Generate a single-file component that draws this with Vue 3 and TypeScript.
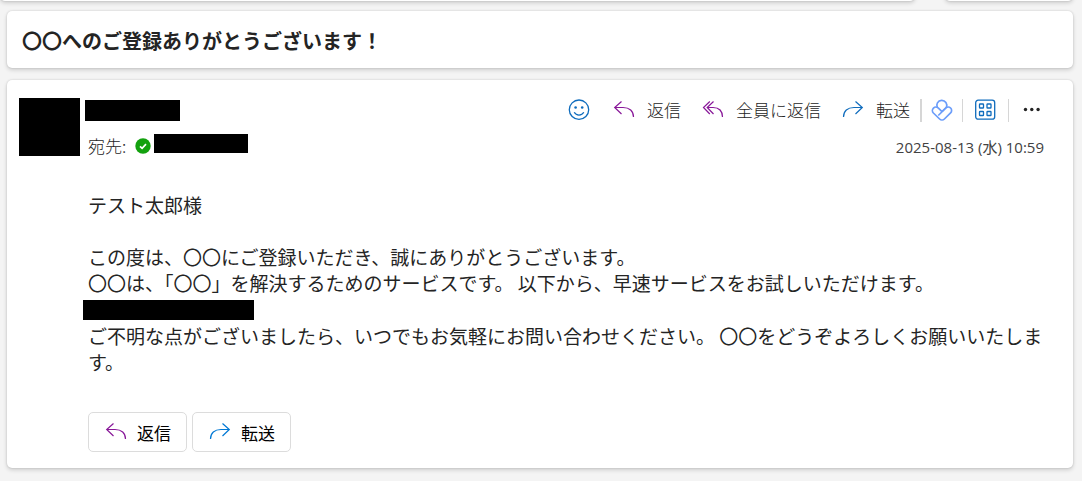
<script setup lang="ts">
interface Line {
  kind: 'text' | 'blank' | 'redacted'
  text?: string
}

const subject = '〇〇へのご登録ありがとうございます！'
const sentAt = '2025-08-13 (水) 10:59'

const lines: Line[] = [
  { kind: 'text', text: 'テスト太郎様' },
  { kind: 'blank' },
  { kind: 'text', text: 'この度は、〇〇にご登録いただき、誠にありがとうございます。' },
  {
    kind: 'text',
    text: '〇〇は、「〇〇」を解決するためのサービスです。 以下から、早速サービスをお試しいただけます。',
  },
  { kind: 'redacted' },
  {
    kind: 'text',
    text: 'ご不明な点がございましたら、いつでもお気軽にお問い合わせください。 〇〇をどうぞよろしくお願いいたします。',
  },
]
</script>

<template>
  <main class="page">
    <div class="ribbon" aria-hidden="true">
      <div class="ribbon-main"></div>
      <div class="ribbon-side"></div>
    </div>

    <div class="stack">
      <header class="card subject">
        <h1>{{ subject }}</h1>
      </header>

      <article class="card message">
        <div class="head">
          <div class="avatar"></div>
          <div class="who">
            <div class="sender"></div>
            <div class="to">
              <span class="to-label">宛先:</span>
              <svg class="presence" viewBox="0 0 16 16" aria-hidden="true">
                <circle cx="8" cy="8" r="7.7" fill="#13a10e" />
                <path d="M5 8.3L7.1 10.3L11 6.2" fill="none" stroke="#fff" stroke-width="1.7" />
              </svg>
              <div class="recipient"></div>
            </div>
          </div>

          <div class="meta">
            <div class="toolbar" role="toolbar" aria-label="メッセージの操作">
              <button type="button" class="tool react" aria-label="リアクション">
                <svg class="icon blue" viewBox="0 0 22 22">
                  <circle cx="11" cy="10.7" r="9.7" />
                  <circle class="dot" cx="7.6" cy="8.5" r="1.3" />
                  <circle class="dot" cx="14.2" cy="8.5" r="1.3" />
                  <path d="M6.2 13.3C8.3 17 13.7 17 15.8 13.3" />
                </svg>
              </button>
              <button type="button" class="tool">
                <svg class="icon thin purple" viewBox="0 0 22 22" aria-hidden="true">
                  <path d="M8.5 2.5L1.7 8.5L8.5 15M1.7 8.5H10C16.5 8.5 20.5 12 20.5 18" />
                </svg>
                返信
              </button>
              <button type="button" class="tool">
                <svg class="icon thin purple" viewBox="0 0 22 22" aria-hidden="true">
                  <path d="M7.8 2.5L1.5 8.5L7.8 15M11.5 2.5L5.2 8.5L11.5 15M5.2 8.5H11C17 8.5 20.5 12 20.5 18" />
                </svg>
                全員に返信
              </button>
              <button type="button" class="tool">
                <svg class="icon thin blue" viewBox="0 0 22 22" aria-hidden="true">
                  <path d="M13.5 2.5L20.3 8.5L13.5 15M20.3 8.5H12C5.5 8.5 1.5 12 1.5 18" />
                </svg>
                転送
              </button>
              <div class="group">
                <span class="rule thick"></span>
                <button type="button" class="tool" aria-label="Viva">
                  <svg class="icon loop" viewBox="0 0 22 22">
                    <path d="M6.4 8.7A5 5 0 1 1 15.4 8.3L11 12.7" />
                    <path d="M11 12.7L7.4 9.1A3.3 3.3 0 0 0 2.4 14L8.6 20A3.4 3.4 0 0 0 13.4 20L19.6 13.8A3.3 3.3 0 0 0 14.8 9L7.3 16.5" />
                  </svg>
                </button>
                <span class="rule"></span>
              </div>
              <button type="button" class="tool apps" aria-label="アプリ">
                <svg class="icon blue" viewBox="0 0 22 22">
                  <rect x="1.7" y="1.2" width="19" height="19" rx="2.5" />
                  <rect x="5.5" y="5" width="4" height="4" rx="0.6" />
                  <rect x="13" y="5" width="4" height="4" rx="0.6" />
                  <rect x="5.5" y="12.5" width="4" height="4" rx="0.6" />
                  <rect x="13" y="12.5" width="4" height="4" rx="0.6" />
                </svg>
              </button>
              <span class="rule"></span>
              <button type="button" class="tool more" aria-label="その他の操作">
                <svg class="icon dark" viewBox="0 0 22 22">
                  <circle cx="3.5" cy="10.5" r="1.7" />
                  <circle cx="9.8" cy="10.5" r="1.7" />
                  <circle cx="16.1" cy="10.5" r="1.7" />
                </svg>
              </button>
            </div>
            <time class="date" datetime="2025-08-13T10:59">{{ sentAt }}</time>
          </div>
        </div>

        <div class="body">
          <template v-for="(line, i) in lines" :key="i">
            <div v-if="line.kind === 'redacted'" class="redacted"></div>
            <p v-else>{{ line.text }}</p>
          </template>
        </div>

        <div class="actions">
          <button type="button" class="action">
            <svg class="icon thin purple" viewBox="0 0 22 22" aria-hidden="true">
              <path d="M8.5 2.5L1.7 8.5L8.5 15M1.7 8.5H10C16.5 8.5 20.5 12 20.5 18" />
            </svg>
            返信
          </button>
          <button type="button" class="action">
            <svg class="icon thin blue" viewBox="0 0 22 22" aria-hidden="true">
              <path d="M13.5 2.5L20.3 8.5L13.5 15M20.3 8.5H12C5.5 8.5 1.5 12 1.5 18" />
            </svg>
            転送
          </button>
        </div>
      </article>
    </div>
  </main>
</template>

<style>
body {
  background: #f4f4f4;
}
</style>

<style scoped>
.page {
  box-sizing: border-box;
  min-height: 100vh;
  overflow: hidden;
  background: #f4f4f4;
  color: #242424;
  font-family: 'Noto Sans CJK JP', sans-serif;
}

.ribbon {
  display: flex;
  gap: 30px;
  margin-top: -39px;
  padding-right: 9px;
  height: 40px;
}

.ribbon-main,
.ribbon-side,
.card {
  background: #fff;
  border-radius: 5px;
  box-shadow: 0 0 2px rgba(0, 0, 0, 0.16), 0 2px 4px rgba(0, 0, 0, 0.16);
}

.ribbon-main {
  flex: 1;
}

.ribbon-side {
  width: 128px;
}

.stack {
  display: flex;
  flex-direction: column;
  gap: 12px;
  padding: 10px 9px 13px 7px;
}

.subject {
  padding: 16px 15px 14px;
}

h1 {
  margin: 0;
  font-size: 20px;
  line-height: 27px;
  font-weight: 700;
}

.message {
  padding: 18px 29px 16px 12px;
}

.head {
  display: flex;
}

.avatar {
  width: 61px;
  height: 58px;
  background: #000;
}

.who {
  display: flex;
  flex-direction: column;
  gap: 13px;
  padding: 2px 0 0 5px;
}

.sender {
  width: 95px;
  height: 21px;
  background: #000;
}

.to {
  display: flex;
  align-items: center;
  gap: 3px;
  padding-left: 3px;
  height: 24px;
}

.to-label {
  width: 44px;
  font-size: 17px;
  font-weight: 300;
  line-height: 24px;
  color: #242424;
}

.presence {
  width: 16px;
  height: 16px;
}

.recipient {
  width: 94px;
  height: 19px;
  margin-bottom: 5px;
  background: #000;
}

.meta {
  display: flex;
  flex: 1;
  flex-direction: column;
  align-items: flex-end;
  gap: 14px;
}

.toolbar {
  display: flex;
  align-items: center;
  gap: 21px;
  height: 24px;
}

button {
  display: flex;
  align-items: center;
  margin: 0;
  padding: 0;
  border: 0;
  background: none;
  font: inherit;
  cursor: pointer;
  white-space: nowrap;
}

.tool {
  gap: 12px;
  color: #242424;
  font-size: 17px;
  font-weight: 300;
  line-height: 24px;
}

.react {
  margin-right: 2px;
}

.group {
  display: flex;
  align-items: center;
  gap: 9px;
  margin-left: -11px;
}

.apps {
  margin: 0 -9px 0 -10px;
}

.more {
  margin-left: -8px;
}

.rule {
  width: 1px;
  height: 23px;
  background: #d6d6d6;
}

.thick {
  width: 2px;
}

.icon {
  display: block;
  width: 22px;
  height: 22px;
  fill: none;
  stroke: currentColor;
  stroke-width: 1.3;
}

.thin {
  stroke-width: 1.2;
}

.blue {
  color: #0f6cbd;
}

.purple {
  color: #881798;
}

.loop {
  color: #6b9dfa;
  stroke-width: 1.7;
}

.dark {
  fill: #242424;
  stroke: none;
}

.dot {
  fill: currentColor;
  stroke: none;
}

.date {
  font-family: 'Open Sans', 'Noto Sans CJK JP', sans-serif;
  font-size: 15px;
  line-height: 22px;
  color: #424242;
}

.body {
  padding: 34px 0 0 64px;
  font-size: 19px;
  line-height: 26px;
}

.body p {
  margin: 0;
  min-height: 26px;
  padding-left: 5px;
}

.redacted {
  width: 171px;
  height: 20px;
  margin: 4px 0 3px;
  background: #000;
}

.actions {
  display: flex;
  gap: 5px;
  padding: 37px 0 0 69px;
}

.action {
  gap: 10px;
  height: 40px;
  padding: 0 15px 0 16px;
  border: 1px solid #dcdcdc;
  border-radius: 5px;
  color: #000;
  font-size: 17px;
}

.action .blue {
  color: #0078d4;
}
</style>
